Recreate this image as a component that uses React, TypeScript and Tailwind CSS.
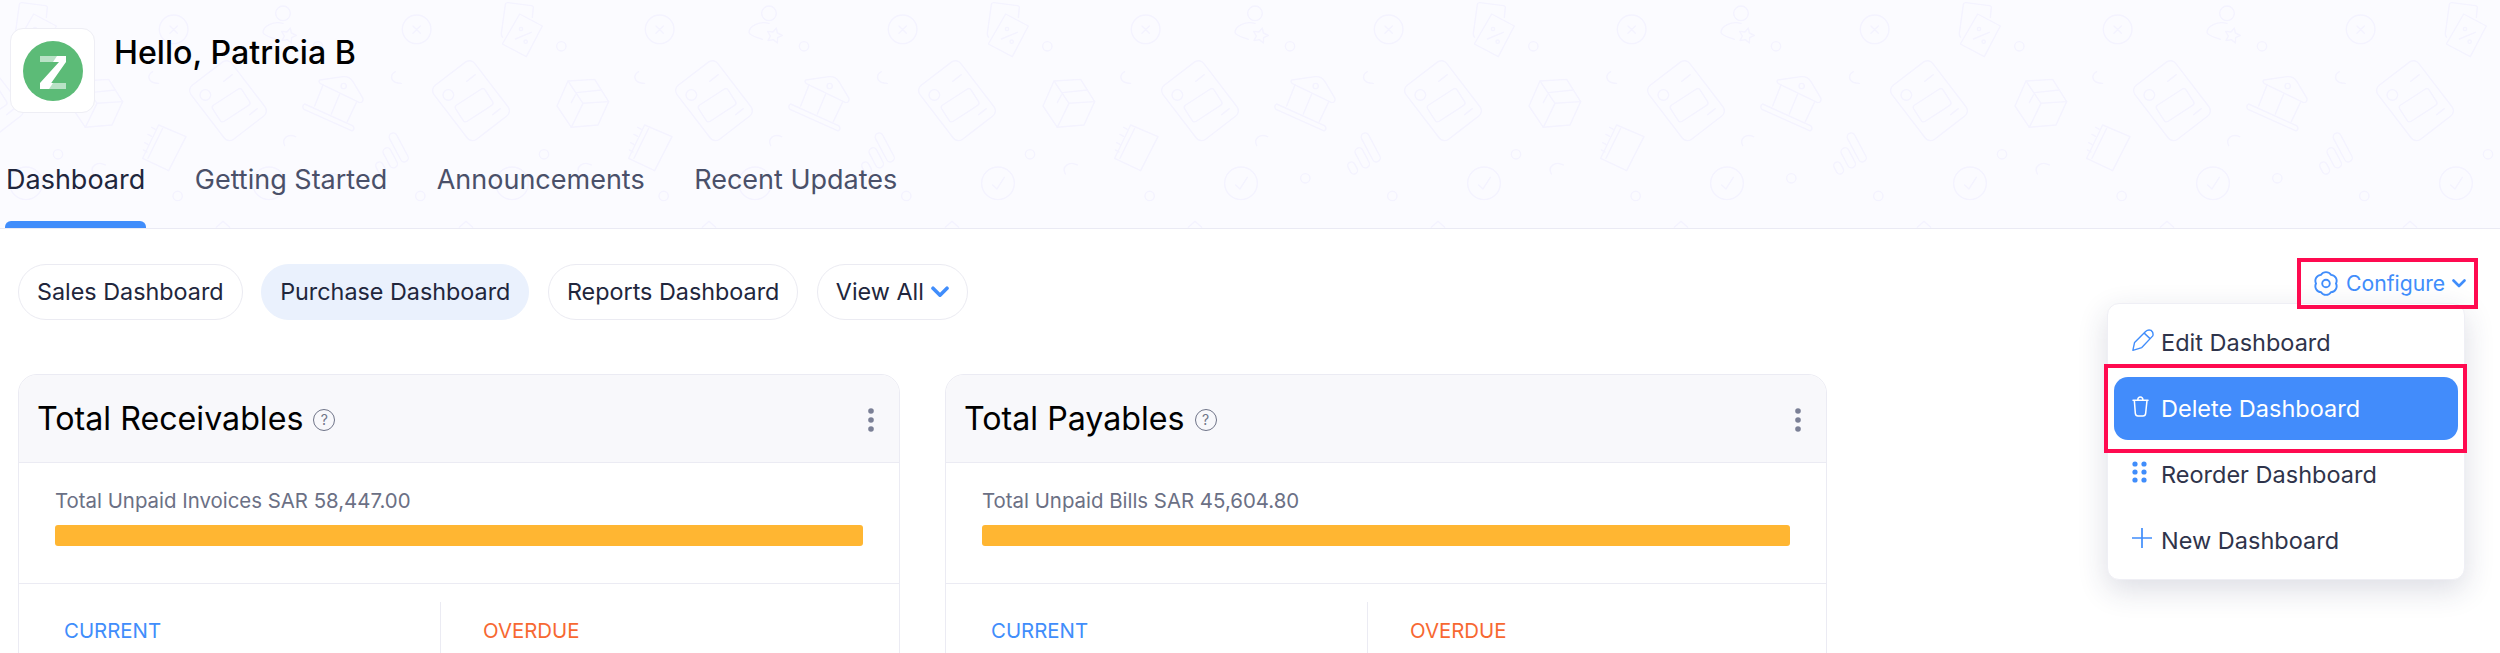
import React from "react";

function CardShape() {
  return (
    <g>
      <rect x="43" y="200" width="154" height="204" rx="20" transform="rotate(-37.5 120 302)" />
      <circle cx="52" cy="285" r="16" />
      <rect x="77" y="287" width="105" height="58" rx="9" transform="rotate(-33 129 316)" />
      <path d="M107 244L133 224M185 344L208 326" />
    </g>
  );
}

function Pattern() {
  return (
    <svg className="absolute inset-0 w-full h-full" aria-hidden="true">
      <defs>
        <pattern id="bgtile" patternUnits="userSpaceOnUse" width="486" height="400">
          <g fill="none" stroke="#f4f3ff" strokeWidth="4.2" strokeLinecap="round" strokeLinejoin="round">
            <g transform="translate(188 0) scale(0.3333)">
              <circle cx="285" cy="40" r="22" />
              <path d="M285 70C255 62 225 80 225 98C228 108 250 112 265 118" />
              <polygon points="307,84 310,99 325,106 311,113 310,129 298,119 282,122 289,108 281,94 297,96" />
              <circle cx="390" cy="139" r="14" />
              <circle cx="686" cy="88" r="43" />
              <path d="M675 78L697 100M697 78L675 100" />
              <path d="M395 240L465 230Q485 228 495 245L525 295Q527 308 515 308L405 255Q388 247 395 240Z" />
              <circle cx="467" cy="258" r="8" />
              <path d="M405 255L380 318M455 282L430 342M505 308L478 365" />
              <path d="M350 312L495 378Q502 388 492 393L348 328Q340 318 350 312Z" />
              <path d="M622 215C605 225 605 250 640 250" />
              <path d="M290 437C280 415 300 400 323 410" />
              <circle cx="243" cy="550" r="49" />
              <path d="M227 555L240 567L262 532" />
              <circle cx="436" cy="535" r="14" />
              <circle cx="697" cy="588" r="14" />
              <rect x="620" y="395" width="24" height="95" rx="12" transform="rotate(-28 632 442)" />
              <rect x="595" y="441" width="24" height="65" rx="12" transform="rotate(-28 607 474)" />
              <rect x="567" y="485" width="22" height="38" rx="11" transform="rotate(-28 578 504)" />
              <path d="M85 682L105 664L125 682" />
              <CardShape />
            </g>
            <g transform="translate(431 0) scale(0.3333)">
              <CardShape />
              <path d="M85 682L105 664L125 682" />
            </g>
            <g transform="translate(-55 0) scale(0.3333)">
              <CardShape />
            </g>
            <g transform="translate(2 0) scale(0.3333)">
              <path d="M133 52L136 22Q136 18 130 17L60 8Q53 7 52 14L40 100Q39 107 44 112" />
              <polygon points="95,42 163,78 115,170 43,132" />
              <circle cx="99" cy="87" r="5" />
              <circle cx="113" cy="125" r="5" />
              <path d="M82 117L130 97" />
              <circle cx="220" cy="139" r="14" />
              <circle cx="515" cy="88" r="43" />
              <path d="M504 78L526 100M526 78L504 100" />
              <path d="M452 215C435 225 435 250 470 250" />
              <polygon points="240,243 320,238 362,305 330,375 250,382 207,318" />
              <path d="M240 243L285 310L362 305M285 310L250 382M265 278L340 270M262 285L250 308" />
              <polygon points="470,375 552,410 500,512 422,475" />
              <path d="M482 385L438 475M449 382L460 388M438 403L449 409M428 428L439 434M424 450L435 456" />
              <circle cx="168" cy="463" r="14" />
              <circle cx="527" cy="588" r="14" />
              <path d="M274 522C262 500 285 482 310 495" />
              <circle cx="72" cy="550" r="49" />
              <path d="M56 555L69 567L91 532" />
            </g>
          </g>
        </pattern>
      </defs>
      <rect width="100%" height="100%" fill="url(#bgtile)" />
    </svg>
  );
}

function Logo() {
  return (
    <div className="w-[85px] h-[85px] bg-white rounded-[13px] border border-[#eeeef5] flex items-center justify-center">
      <svg width="60" height="60" viewBox="0 0 60 60">
        <circle cx="30" cy="30" r="30" fill="#5cbb77" />
        <polygon points="17,15 43,15 43,21 24,48 17,48 17,42 36,21 17,21" fill="#ffffff" />
        <polygon points="17,15 34,15 30,21 17,21" fill="#b9e2c6" />
        <polygon points="17,42 43,42 43,48 17,48" fill="#ffffff" />
        <polygon points="30,42 43,42 43,48 26,48" fill="#b9e2c6" />
      </svg>
    </div>
  );
}

function Tab({ label, active }: { label: string; active?: boolean }) {
  return (
    <div className="flex flex-col items-stretch h-[100px]">
      <span className={`px-px text-[27px] leading-[40px] mt-[32px] ${active ? "text-[#21263c]" : "text-[#4a5069]"}`}>
        {label}
      </span>
      {active ? <div className="mt-auto h-[7px] bg-[#408dfb] rounded-t-[6px]" /> : null}
    </div>
  );
}

function Chip({ label, active, children }: { label: string; active?: boolean; children?: React.ReactNode }) {
  return (
    <div
      className={`h-[56px] px-[18px] flex items-center gap-[7px] rounded-[28px] border text-[23.35px] text-[#21263c] ${
        active ? "bg-[#eaf1fd] border-[#eaf1fd]" : "bg-white border-[#ebebf2]"
      }`}
    >
      <span>{label}</span>
      {children}
    </div>
  );
}

function DashCard({ title, unpaid }: { title: string; unpaid: string }) {
  return (
    <div className="w-[882px] border border-[#ebebf3] rounded-t-[19px] overflow-hidden bg-white">
      <div className="h-[88px] bg-[#f8f8fb] border-b border-[#ebebf3] flex items-center pl-[18px] pr-[25px]">
        <span className="text-[32.2px] mt-[1px] text-[#000000]">{title}</span>
        <span className="ml-[10px] mt-[2px] w-[22px] h-[22px] rounded-full border border-[#6f7488] text-[#6f7488] text-[14px] flex items-center justify-center">
          ?
        </span>
        <svg className="ml-auto mt-[2px]" width="6" height="24" viewBox="0 0 6 24">
          <circle cx="3" cy="3" r="2.8" fill="#7b8096" />
          <circle cx="3" cy="12" r="2.8" fill="#7b8096" />
          <circle cx="3" cy="21" r="2.8" fill="#7b8096" />
        </svg>
      </div>
      <div className="h-[121px] border-b border-[#ebebf3] px-[36px] pt-[22px]">
        <div className="text-[20.4px] leading-[32px] text-[#6b7085]">{unpaid}</div>
        <div className="mt-[8px] w-[808px] h-[21px] rounded-[3px] bg-[#ffb632]" />
      </div>
      <div className="flex pt-[18px] text-[20.4px]">
        <div className="w-[421px] pt-[14px] pl-[45px] text-[#408dfb]">CURRENT</div>
        <div className="flex-1 h-[100px] border-l border-[#ebebf3] pt-[14px] pl-[42px] text-[#f76831]">OVERDUE</div>
      </div>
    </div>
  );
}

function MenuRow({ icon, label, active }: { icon: React.ReactNode; label: string; active?: boolean }) {
  return (
    <div className="h-[66px] py-[1.5px]">
      <div
        className={`mx-[6px] h-full rounded-[14px] pl-[18px] flex items-center text-[23.5px] ${
          active ? "bg-[#428cfb] text-white" : "text-[#2f344b]"
        }`}
      >
        <span className="w-[29px] flex items-start -mt-[4px]">{icon}</span>
        <span className="mt-[2px]">{label}</span>
      </div>
    </div>
  );
}

export default function App() {
  return (
    <div className="w-[2500px] h-[653px] overflow-hidden bg-white" style={{ fontFamily: "Inter, sans-serif" }}>
      <header className="relative h-[229px] bg-[#fbfbff] border-b border-[#eaeaf4]">
        <Pattern />
        <div className="relative h-full flex flex-col">
          <div className="flex items-start pt-[28px] pl-[10px]">
            <Logo />
            <div className="ml-[19px] mt-[3px] text-[32.2px] leading-[44px] font-medium text-[#000000]">Hello, Patricia B</div>
          </div>
          <nav className="mt-auto flex gap-[47.5px] pl-[5px]">
            <Tab label="Dashboard" active />
            <Tab label="Getting Started" />
            <Tab label="Announcements" />
            <Tab label="Recent Updates" />
          </nav>
        </div>
      </header>

      <main className="pl-[18px] pr-[22px]">
        <div className="flex items-start justify-between pt-[35px]">
          <div className="flex gap-[18.5px]">
            <Chip label="Sales Dashboard" />
            <Chip label="Purchase Dashboard" active />
            <Chip label="Reports Dashboard" />
            <Chip label="View All">
              <svg width="18" height="12" viewBox="0 0 18 12" fill="none">
                <path d="M2 2.2L9 9.2L16 2.2" stroke="#408dfb" strokeWidth="3.6" strokeLinecap="round" strokeLinejoin="round" />
              </svg>
            </Chip>
          </div>
          <div className="relative -mt-[6px]">
            <div className="relative z-20 w-[181px] h-[51px] border-[4px] border-[#ff0a50] flex items-center pl-[13px] text-[#408dfb] text-[21.2px]">
              <svg width="24" height="25" viewBox="-12 -12.5 24 25" fill="none" stroke="#408dfb" strokeWidth="1.9">
                <path d="M-5 -8.66A6 6 0 0 1 5 -8.66A6 6 0 0 1 10 0A6 6 0 0 1 5 8.66A6 6 0 0 1 -5 8.66A6 6 0 0 1 -10 0A6 6 0 0 1 -5 -8.66Z" />
                <circle cx="0" cy="0" r="3.8" />
              </svg>
              <span className="ml-[8px]">Configure</span>
              <svg className="ml-[7px]" width="14" height="9" viewBox="0 0 14 9" fill="none">
                <path d="M1.5 1.5L7 7L12.5 1.5" stroke="#408dfb" strokeWidth="2.6" strokeLinecap="round" strokeLinejoin="round" />
              </svg>
            </div>
            <div className="absolute z-10 left-[-190px] top-[45px] w-[358px] h-[277px] bg-white border border-[#efeff5] rounded-[12px] pt-[5px] shadow-[0_10px_30px_rgba(40,45,90,0.16)]">
              <MenuRow
                label="Edit Dashboard"
                icon={
                  <svg width="22" height="22" viewBox="0 0 63 64" fill="none" stroke="#408dfb" strokeWidth="4" strokeLinejoin="round">
                    <path d="M2 62L7 39L39 7Q46 1 55 4Q63 11 60 20L28 54Z" />
                    <path d="M35 12L52 28" />
                  </svg>
                }
              />
              <MenuRow
                active
                label="Delete Dashboard"
                icon={
                  <svg width="17" height="21" viewBox="0 0 51 63" fill="none" stroke="#ffffff" strokeWidth="4.5" strokeLinecap="round" strokeLinejoin="round">
                    <path d="M3 13H48M7 13L10 52Q11 60 18 60H33Q40 60 41 52L45 13M17 12Q18 3 25 3Q32 3 33 12" />
                  </svg>
                }
              />
              <MenuRow
                label="Reorder Dashboard"
                icon={
                  <svg width="15" height="22" viewBox="0 0 15 22" fill="#408dfb">
                    <circle cx="3" cy="3" r="2.6" />
                    <circle cx="12" cy="3" r="2.6" />
                    <circle cx="3" cy="11" r="2.6" />
                    <circle cx="12" cy="11" r="2.6" />
                    <circle cx="3" cy="19" r="2.6" />
                    <circle cx="12" cy="19" r="2.6" />
                  </svg>
                }
              />
              <MenuRow
                label="New Dashboard"
                icon={
                  <svg width="20" height="20" viewBox="0 0 20 20" fill="none" stroke="#408dfb" strokeWidth="1.7">
                    <path d="M10 0V20M0 10H20" />
                  </svg>
                }
              />
              <div className="absolute left-[-4px] top-[60px] w-[363px] h-[89px] border-[4px] border-[#ff0a50]" />
            </div>
          </div>
        </div>

        <div className="flex gap-[45px] mt-[54px]">
          <DashCard title="Total Receivables" unpaid="Total Unpaid Invoices SAR 58,447.00" />
          <DashCard title="Total Payables" unpaid="Total Unpaid Bills SAR 45,604.80" />
        </div>
      </main>
    </div>
  );
}
